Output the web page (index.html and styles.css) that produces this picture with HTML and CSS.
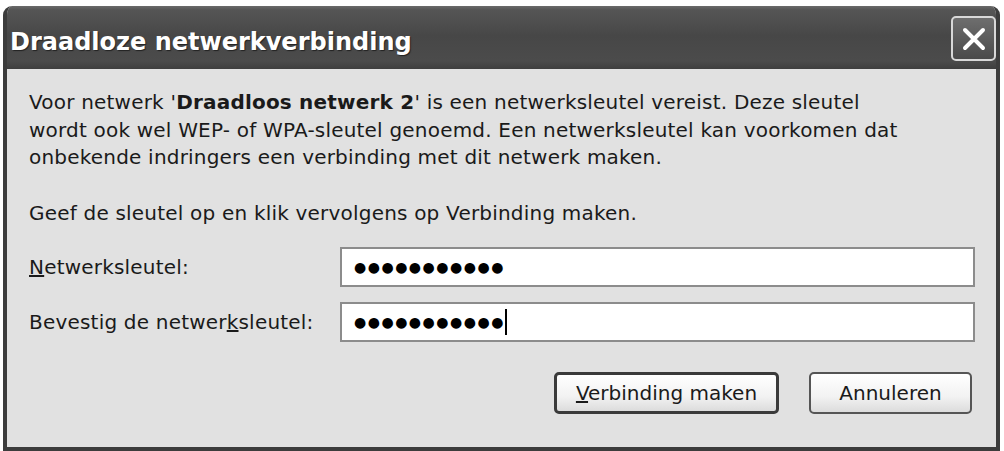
FILE: index.html
```html
<!DOCTYPE html>
<html>
<head>
<meta charset="utf-8">
<link rel="stylesheet" href="styles.css">
</head>
<body>
<div class="window">
  <div class="titlebar">
    <span class="title">Draadloze netwerkverbinding</span>
    <span class="close">
      <svg width="30" height="30" viewBox="0 0 30 30"><path d="M6 6 L24 24 M24 6 L6 24" stroke="#fff" stroke-width="4" stroke-linecap="round"/></svg>
    </span>
  </div>
  <div class="content">
    <p class="intro">Voor netwerk '<b>Draadloos netwerk 2</b>' is een netwerksleutel vereist. Deze sleutel<br>wordt ook wel WEP- of WPA-sleutel genoemd. Een netwerksleutel kan voorkomen dat<br>onbekende indringers een verbinding met dit netwerk maken.</p>
    <p class="instr">Geef de sleutel op en klik vervolgens op Verbinding maken.</p>
    <div class="row">
      <span class="label"><u>N</u>etwerksleutel:</span>
      <div class="field"><span class="dots">●●●●●●●●●●●</span></div>
    </div>
    <div class="row">
      <span class="label">Bevestig de netwer<u>k</u>sleutel:</span>
      <div class="field"><span class="dots">●●●●●●●●●●●</span><span class="caret"></span></div>
    </div>
    <div class="buttons">
      <div class="btn btn-default"><span><u>V</u>erbinding maken</span></div>
      <div class="btn">Annuleren</div>
    </div>
  </div>
</div>
</body>
</html>
```

FILE: styles.css
```css
html, body {
  margin: 0;
  padding: 0;
  background: #ffffff;
  width: 1004px;
  height: 451px;
  overflow: hidden;
}
.window {
  margin: 6px 4px 0 3px;
  height: 445px;
  box-sizing: border-box;
  border: 4px solid #3c3c3c;
  border-top: none;
  border-radius: 9px 9px 0 0;
  background: #e1e1e1;
  display: flex;
  flex-direction: column;
  overflow: hidden;
}
.titlebar {
  height: 63px;
  flex: none;
  background: linear-gradient(#6a6a6a 0px, #555 4px, #474747 30px, #4b4b4b 55px, #3e3e3e 63px);
  display: flex;
  align-items: center;
  justify-content: space-between;
  padding: 0 3px 0 7px;
  margin: 0 -4px;
}
.title {
  font-family: "DejaVu Sans", sans-serif;
  font-weight: bold;
  font-size: 24px;
  color: #ffffff;
  text-shadow: 1px 1px 1px #222;
  margin-top: 9px;
}
.close {
  width: 41px;
  height: 41px;
  border: 2px solid #d8d8d8;
  border-radius: 5px;
  background: linear-gradient(#6e6e6e, #4a4a4a);
  display: flex;
  align-items: center;
  justify-content: center;
  margin-top: 2px;
  margin-right: 1px;
}
.content {
  padding: 20px 21px 0 22px;
  font-family: "DejaVu Sans", sans-serif;
  font-size: 20px;
  letter-spacing: 0.2px;
  color: #1a1a1a;
}
.intro {
  margin: 0;
  line-height: 27.5px;
}
.intro b {
  font-weight: bold;
}
.instr {
  margin: 28px 0 0 0;
  line-height: 27px;
}
.row {
  display: flex;
  align-items: center;
  margin-top: 20px;
}
.row + .row {
  margin-top: 15px;
}
.label {
  width: 311px;
  flex: none;
}
.field {
  flex: 1;
  height: 40px;
  box-sizing: border-box;
  border: 2px solid #8c8c8c;
  background: #ffffff;
  display: flex;
  align-items: center;
  padding-left: 12px;
}
.dots {
  font-size: 14px;
  letter-spacing: 1.5px;
  color: #000;
}
.caret {
  display: inline-block;
  width: 2px;
  height: 26px;
  background: #000;
}
.buttons {
  display: flex;
  justify-content: flex-end;
  gap: 30px;
  margin-top: 30px;
  padding-right: 3px;
}
.btn {
  height: 42px;
  box-sizing: border-box;
  border: 2px solid #555;
  border-radius: 5px;
  background: linear-gradient(#ffffff, #f2f2f2 60%, #dcdcdc);
  display: flex;
  align-items: center;
  justify-content: center;
  width: 163px;
  font-size: 20px;
  letter-spacing: 0;
}
.btn-default {
  width: 225px;
  border: 3px solid #3a3a3a;
}
```
